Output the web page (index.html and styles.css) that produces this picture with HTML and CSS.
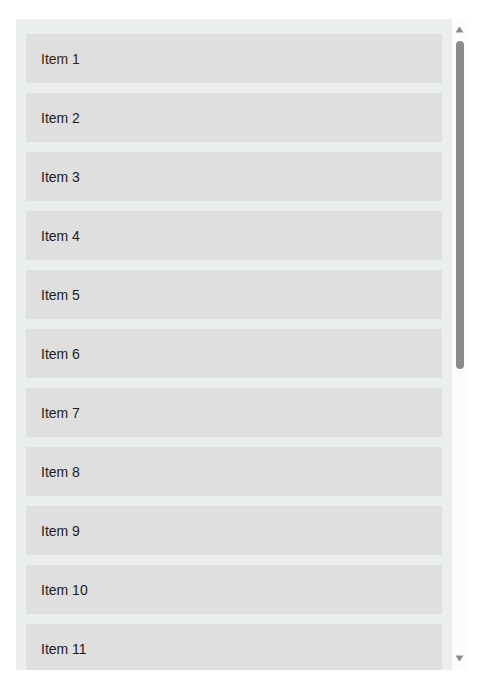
FILE: index.html
```html
<!DOCTYPE html>
<html>
<head>
<meta charset="utf-8">
<link rel="stylesheet" href="styles.css">
</head>
<body>
<div class="frame">
  <div class="scroller">
    <div class="list">
      <div class="item item-active">Item 1</div>
      <div class="item">Item 2</div>
      <div class="item">Item 3</div>
      <div class="item">Item 4</div>
      <div class="item">Item 5</div>
      <div class="item">Item 6</div>
      <div class="item">Item 7</div>
      <div class="item">Item 8</div>
      <div class="item">Item 9</div>
      <div class="item">Item 10</div>
      <div class="item">Item 11</div>
    </div>
    <div class="scrollbar">
      <svg class="arrow" width="9" height="7" viewBox="0 0 9 7"><path d="M4.5 0.5 L8.5 6.5 L0.5 6.5 Z" fill="#8a8a8a"/></svg>
      <div class="thumb"></div>
      <div class="spacer"></div>
      <svg class="arrow" width="9" height="7" viewBox="0 0 9 7"><path d="M0.5 0.5 L8.5 0.5 L4.5 6.5 Z" fill="#8a8a8a"/></svg>
    </div>
  </div>
</div>
</body>
</html>
```
FILE: styles.css
```css
html, body {
  margin: 0;
  padding: 0;
  background: #ffffff;
}
.frame {
  padding: 19px 0 0 16px;
}
.scroller {
  display: flex;
  width: 451px;
  height: 651px;
  overflow: hidden;
}
.list {
  flex: 1;
  background: #eaeeef;
  padding: 15px 10px;
  display: flex;
  flex-direction: column;
  gap: 10px;
  overflow: hidden;
}
.item {
  flex: 0 0 49px;
  height: 49px;
  background: #dfdfdf;
  padding-left: 15px;
  display: flex;
  align-items: center;
  font-family: "Liberation Sans", Arial, sans-serif;
  font-size: 14px;
  color: #1c1c1c;
}
.item-active {
  color: #3a2608;
}
.scrollbar {
  width: 15px;
  background: #fcfcfc;
  display: flex;
  flex-direction: column;
  align-items: center;
  padding: 7px 0 8px;
  box-sizing: border-box;
}
.arrow {
  display: block;
  flex: none;
}
.thumb {
  margin-top: 8px;
  width: 8px;
  height: 328px;
  border-radius: 4px;
  background: #8a8a8a;
  flex: none;
}
.spacer {
  flex: 1;
}
```
